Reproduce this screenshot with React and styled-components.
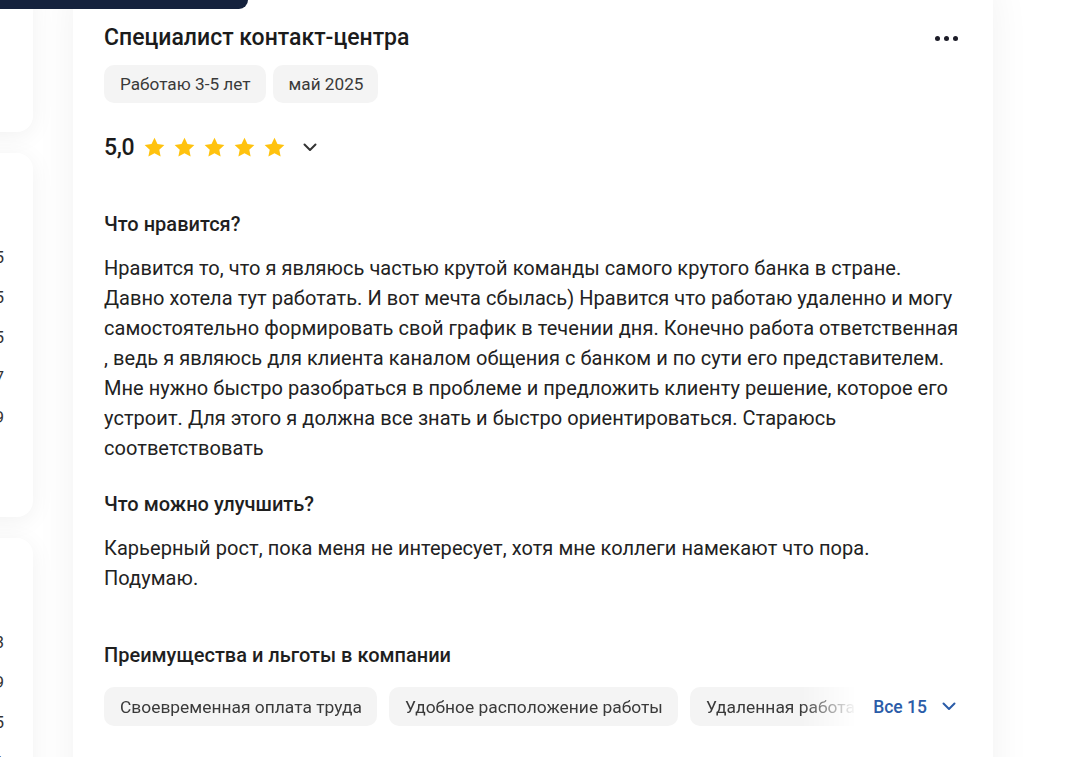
import React from 'react'
import styled, { createGlobalStyle } from 'styled-components'

const GlobalStyle = createGlobalStyle`
    html, body {
        margin: 0;
        padding: 0;
        background: #ffffff;
        font-family: Roboto, "Noto Sans", "Liberation Sans", sans-serif;
        color: #222222;
        overflow: hidden;
    }
`;

const TopBar = styled.div`
    position: absolute;
    top: 0;
    left: 0;
    width: 248px;
    height: 9px;
    background: #15223d;
    border-bottom-right-radius: 10px;
    z-index: 5;
`;

const Layout = styled.div`
    display: flex;
    align-items: flex-start;
    gap: 40px;
    margin-top: -16px;
`;

const Side = styled.aside`
    width: 33px;
    flex-shrink: 0;
    display: flex;
    flex-direction: column;
    align-items: flex-end;
    gap: 21px;
`;

const SideCard = styled.div`
    width: 320px;
    flex-shrink: 0;
    height: ${p => p.$h}px;
    box-sizing: border-box;
    background: #fff;
    border-radius: 16px;
    box-shadow: 0 4px 24px rgba(0, 0, 0, 0.06);
    padding: 84px 29px 0 24px;
    display: flex;
    flex-direction: column;
`;

const SideRow = styled.div`
    display: flex;
    justify-content: space-between;
    align-items: center;
    height: 40px;
    font-size: 17px;
    color: #333;
`;

const Card = styled.main`
    width: 920px;
    flex-shrink: 0;
    box-sizing: border-box;
    background: #fff;
    border-radius: 16px;
    box-shadow: 0 0 40px rgba(0, 0, 0, 0.06);
    padding: 40px 32px 120px 31px;
`;

const Header = styled.div`
    display: flex;
    justify-content: space-between;
    align-items: center;
`;

const Title = styled.h2`
    margin: 0;
    font-size: 23px;
    line-height: 28px;
    font-weight: 500;
    color: #1b1b1b;
`;

const Dots = styled.button`
    display: flex;
    gap: 4px;
    align-items: center;
    border: none;
    background: none;
    padding: 4px 3px;
    cursor: pointer;

    span {
        width: 5px;
        height: 5px;
        border-radius: 50%;
        background: #1c1c28;
    }
`;

const Tags = styled.div`
    display: flex;
    gap: 7px;
    margin-top: ${p => p.$mt || 0}px;
    overflow: hidden;
`;

const Tag = styled.span`
    display: inline-flex;
    align-items: center;
    flex-shrink: 0;
    height: ${p => p.$h || 38}px;
    padding: 0 15px 0 16px;
    border-radius: 10px;
    background: #f4f4f4;
    font-size: ${p => p.$fs || 17.2}px;
    color: #3a3a3a;
    white-space: nowrap;
`;

const RatingRow = styled.div`
    display: flex;
    align-items: center;
    height: 28px;
    margin-top: 30px;
`;

const Score = styled.span`
    font-size: 23px;
    font-weight: 500;
    color: #1b1b1b;
    margin-right: 9px;
    letter-spacing: -0.3px;
`;

const Stars = styled.div`
    display: flex;
    gap: 7px;
    margin-right: 17px;
`;

const Section = styled.section`
    margin-top: ${p => p.$mt}px;
`;

const Heading = styled.h3`
    margin: 0;
    font-size: 20px;
    line-height: 24px;
    font-weight: 500;
    color: #1f1f1f;
`;

const Text = styled.p`
    margin: 17px 0 0;
    font-size: 20px;
    line-height: 30px;
    letter-spacing: 0.05px;
    color: #222;
`;

const BenefitsRow = styled.div`
    display: flex;
    align-items: center;
    gap: 16px;
    margin-top: 20px;
`;

const ChipsTrack = styled.div`
    flex: 1;
    display: flex;
    gap: 12px;
    overflow: hidden;
    -webkit-mask-image: linear-gradient(to right, #000 calc(100% - 56px), transparent);
    mask-image: linear-gradient(to right, #000 calc(100% - 56px), transparent);
`;

const ShowAll = styled.button`
    display: flex;
    align-items: center;
    gap: 15px;
    border: none;
    background: none;
    padding: 0 5px 0 0;
    font-family: inherit;
    font-size: 17.5px;
    font-weight: 500;
    color: #2b5ca8;
    cursor: pointer;
`;

const Star = () => (
    <svg width="23" height="23" viewBox="0 0 24 24">
        <path d="M12 1.8l3.1 6.6 7.2.9-5.3 5 1.4 7.1L12 17.9l-6.4 3.5 1.4-7.1-5.3-5 7.2-.9z" fill="#ffc20e" />
    </svg>
);

const Chevron = ({ color }) => (
    <svg width="14" height="9" viewBox="0 0 14 9">
        <path d="M1.5 1.5L7 7l5.5-5.5" fill="none" stroke={color} strokeWidth="2" strokeLinecap="round" strokeLinejoin="round" />
    </svg>
);

const sideCards = [
    { h: 148, rows: [] },
    { h: 364, rows: ['4,5', '4,5', '4,5', '4,7', '3,9'] },
    { h: 400, rows: ['4,3', '3,9', '4,5', '4,1'] },
];

const benefits = ['Своевременная оплата труда', 'Удобное расположение работы', 'Удаленная работа', 'ДМС']

export default () => (
    <>
        <GlobalStyle />
        <TopBar />
        <Layout>
            <Side>
                {sideCards.map((card, i) => (
                    <SideCard key={i} $h={card.h}>
                        {card.rows.map((v, j) => (
                            <SideRow key={j}>
                                <span>Оценка</span>
                                <span>{v}</span>
                            </SideRow>
                        ))}
                    </SideCard>
                ))}
            </Side>
            <Card>
                <Header>
                    <Title>Специалист контакт-центра</Title>
                    <Dots aria-label="Ещё"><span /><span /><span /></Dots>
                </Header>
                <Tags $mt={13}>
                    <Tag>Работаю 3-5 лет</Tag>
                    <Tag>май 2025</Tag>
                </Tags>
                <RatingRow>
                    <Score>5,0</Score>
                    <Stars>
                        {[0, 1, 2, 3, 4].map(i => <Star key={i} />)}
                    </Stars>
                    <Chevron color="#333" />
                </RatingRow>
                <Section $mt={51}>
                    <Heading>Что нравится?</Heading>
                    <Text>
                        Нравится то, что я являюсь частью крутой команды самого крутого банка в стране. Давно хотела тут работать. И вот мечта сбылась) Нравится что работаю удаленно и могу самостоятельно формировать свой график в течении дня. Конечно работа ответственная , ведь я являюсь для клиента каналом общения с банком и по сути его представителем. Мне нужно быстро разобраться в проблеме и предложить клиенту решение, которое его устроит. Для этого я должна все знать и быстро ориентироваться. Стараюсь соответствовать
                    </Text>
                </Section>
                <Section $mt={29}>
                    <Heading>Что можно улучшить?</Heading>
                    <Text>
                        Карьерный рост, пока меня не интересует, хотя мне коллеги намекают что пора. Подумаю.
                    </Text>
                </Section>
                <Section $mt={50}>
                    <Heading>Преимущества и льготы в компании</Heading>
                    <BenefitsRow>
                        <ChipsTrack>
                            {benefits.map(b => <Tag key={b} $h={39} $fs={17.4}>{b}</Tag>)}
                        </ChipsTrack>
                        <ShowAll>
                            Все 15
                            <Chevron color="#2b5ca8" />
                        </ShowAll>
                    </BenefitsRow>
                </Section>
            </Card>
        </Layout>
    </>
)
